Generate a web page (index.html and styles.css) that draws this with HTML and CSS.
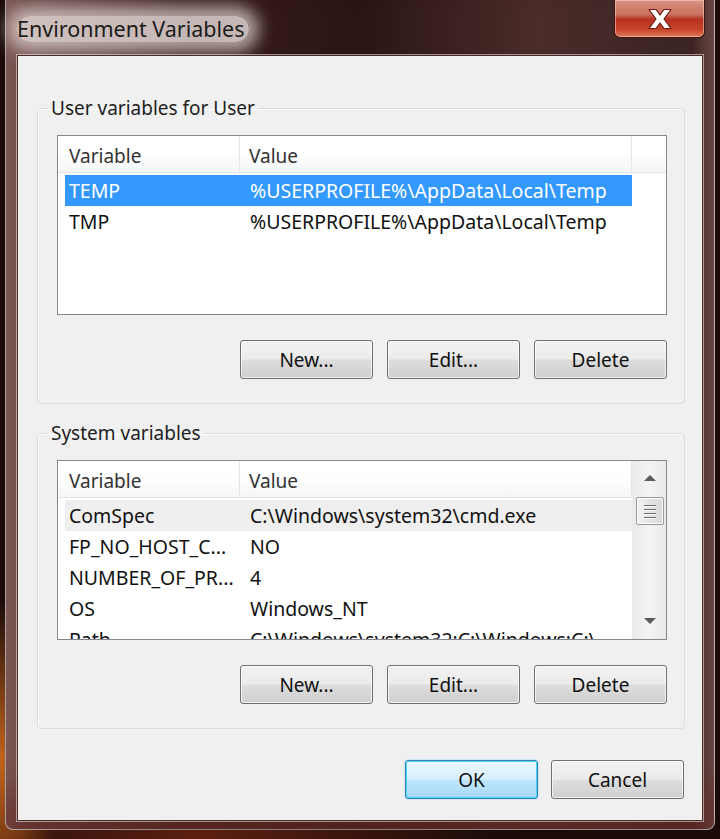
FILE: index.html
```html
<!DOCTYPE html>
<html lang="en">
<head>
    <meta charset="UTF-8">
    <meta name="viewport" content="width=device-width, initial-scale=1.0">
    <title>Environment Variables</title>
    <link rel="stylesheet" href="styles.css">
</head>
<body>
    <div class="window">
        <div class="titlebar">
            <span class="title">Environment Variables</span>
            <button class="close" aria-label="Close">
                <svg width="28" height="22" viewBox="0 0 28 22">
                    <path d="M3 1.5h7l4 5.5 4-5.5h7l-7 9.5 7 9.5h-7l-4-5.5-4 5.5H3l7-9.5z" fill="#fff" stroke="#6b1b10" stroke-width="1.2" stroke-linejoin="round"/>
                </svg>
            </button>
        </div>
        <div class="client">
            <fieldset class="group">
                <legend>User variables for User</legend>
                <div class="list">
                    <div class="list-body">
                        <div class="list-head">
                            <span class="col-var">Variable</span>
                            <span class="col-val">Value</span>
                            <span class="col-fill"></span>
                        </div>
                        <div class="row selected"><span>TEMP</span><span>%USERPROFILE%\AppData\Local\Temp</span></div>
                        <div class="row"><span>TMP</span><span>%USERPROFILE%\AppData\Local\Temp</span></div>
                    </div>
                </div>
                <div class="buttons">
                    <button class="btn">New...</button>
                    <button class="btn">Edit...</button>
                    <button class="btn">Delete</button>
                </div>
            </fieldset>

            <fieldset class="group">
                <legend>System variables</legend>
                <div class="list">
                    <div class="list-body">
                        <div class="list-head">
                            <span class="col-var">Variable</span>
                            <span class="col-val">Value</span>
                        </div>
                        <div class="row focused"><span>ComSpec</span><span>C:\Windows\system32\cmd.exe</span></div>
                        <div class="row"><span>FP_NO_HOST_C...</span><span>NO</span></div>
                        <div class="row"><span>NUMBER_OF_PR...</span><span>4</span></div>
                        <div class="row"><span>OS</span><span>Windows_NT</span></div>
                        <div class="row"><span>Path</span><span>C:\Windows\system32;C:\Windows;C:\</span></div>
                    </div>
                    <div class="scrollbar">
                        <span class="arrow up"></span>
                        <span class="thumb"><i></i><i></i><i></i><i></i></span>
                        <span class="arrow down"></span>
                    </div>
                </div>
                <div class="buttons">
                    <button class="btn">New...</button>
                    <button class="btn">Edit...</button>
                    <button class="btn">Delete</button>
                </div>
            </fieldset>

            <div class="dialog-buttons">
                <button class="btn default">OK</button>
                <button class="btn">Cancel</button>
            </div>
        </div>
    </div>
</body>
</html>
```

FILE: styles.css
```css
* {
    box-sizing: border-box;
}
body {
    margin: 0;
    width: 720px;
    height: 839px;
    overflow: hidden;
    font-family: "Noto Sans", "Open Sans", sans-serif;
    background-color: #1a0b09;
    background-image:
        radial-gradient(ellipse 60px 160px at 0 760px, rgba(214, 110, 30, 0.9), rgba(214, 110, 30, 0) 100%),
        radial-gradient(ellipse 300px 120px at 200px 839px, rgba(120, 40, 20, 0.7), rgba(120, 40, 20, 0) 100%);
}
.window {
    margin: 0 5px;
    height: 830px;
    padding: 0 11px 8px;
    border: 1px solid rgba(255, 255, 255, 0.45);
    border-top: none;
    border-radius: 0 0 8px 8px;
    background: linear-gradient(90deg, #8a6f6c 0, #6a4a48 3%, #3a1d1c 25%, #2a1514 50%, #4a2c2a 75%, #3a2423 97%, #6a5452 100%);
    display: flex;
    flex-direction: column;
    box-shadow: inset 0 -40px 40px rgba(100, 42, 36, 0.7);
}
.titlebar {
    height: 55px;
    display: flex;
    align-items: flex-start;
    justify-content: space-between;
}
.title {
    margin-top: 16px;
    margin-right: auto;
    padding: 0 4px 0 0;
    font-size: 21.5px;
    color: #1c1c1c;
    line-height: 26px;
    background: rgba(232, 222, 220, 0.8);
    border-radius: 14px;
    box-shadow: 0 0 16px 10px rgba(232, 222, 220, 0.7);
}
.close {
    width: 91px;
    height: 38px;
    margin-right: -2px;
    padding: 0;
    border: 1px solid #3f1510;
    border-top: none;
    border-radius: 0 0 6px 6px;
    background: linear-gradient(180deg, #d99383 0, #c9705d 40%, #b6321e 52%, #c8452c 80%, #e07a5c 100%);
    box-shadow: inset 0 0 0 1px rgba(255, 210, 200, 0.55);
    display: flex;
    align-items: center;
    justify-content: center;
}
.client {
    flex: 1;
    background: #f0f0f0;
    border: 1px solid #4a2a28;
    box-shadow: 0 0 0 1px rgba(255, 255, 255, 0.5);
    padding: 40px 17px 0 19px;
    display: flex;
    flex-direction: column;
}
.group {
    min-width: 0;
    margin: 0 0 17px;
    padding: 15px 17px 24px 19px;
    border: 1px solid #dcdcdc;
    border-radius: 4px;
    box-shadow: inset 1px 1px 0 #fff;
}
.group legend {
    padding: 0 3px;
    margin-left: -9px;
    font-size: 19px;
    color: #1e1e1e;
    line-height: 24px;
}
.list {
    height: 180px;
    border: 1px solid #828790;
    background: #fff;
    display: flex;
    overflow: hidden;
}
.list-body {
    flex: 1;
    min-width: 0;
    overflow: hidden;
}
.list-head {
    display: flex;
    height: 37px;
    border-bottom: 1px solid #e5e5e5;
    background: linear-gradient(180deg, #fff 0, #fff 40%, #f5f6f7 100%);
    font-size: 19px;
    color: #333;
    margin-bottom: 2px;
}
.list-head span {
    display: flex;
    align-items: center;
    padding-top: 4px;
    border-right: 1px solid #e5e5e5;
}
.col-var {
    width: 182px;
    padding-left: 11px;
}
.col-val {
    width: 392px;
    padding-left: 9px;
}
.col-fill {
    flex: 1;
    border-right: none !important;
}
.row {
    display: flex;
    height: 31px;
    margin-left: 7px;
    width: 567px;
    align-items: center;
    font-size: 19.5px;
    color: #111;
    white-space: nowrap;
}
.row span:first-child {
    width: 175px;
    padding-left: 4px;
}
.row span:last-child {
    padding-left: 10px;
}
.row.selected {
    background: #3399ff;
    color: #fff;
}
.row.focused {
    background: #efefef;
}
.scrollbar {
    width: 34px;
    background: linear-gradient(90deg, #e9e9e9, #f4f4f4 50%, #e9e9e9);
    border-left: 1px solid #ececec;
    display: flex;
    flex-direction: column;
    align-items: center;
}
.arrow {
    width: 0;
    height: 0;
    border-left: 6px solid transparent;
    border-right: 6px solid transparent;
}
.arrow.up {
    margin-top: 14px;
    border-bottom: 6px solid #5b5b5b;
}
.arrow.down {
    margin-top: auto;
    margin-bottom: 15px;
    border-top: 6px solid #5b5b5b;
}
.thumb {
    margin-top: 16px;
    width: 28px;
    height: 28px;
    border: 1px solid #9a9a9a;
    border-radius: 2px;
    background: linear-gradient(90deg, #f3f3f3, #e4e4e4 50%, #d8d8d8);
    box-shadow: inset 0 0 0 1px #fbfbfb;
    display: flex;
    flex-direction: column;
    align-items: center;
    justify-content: center;
    gap: 3px;
}
.thumb i {
    display: block;
    width: 12px;
    height: 1px;
    background: #6e6e6e;
    box-shadow: 0 1px 0 #fafafa;
}
.buttons {
    display: flex;
    justify-content: flex-end;
    gap: 14px;
    margin-top: 25px;
}
.btn {
    width: 133px;
    height: 39px;
    padding: 0;
    font-family: inherit;
    font-size: 19px;
    color: #111;
    border: 1px solid #707070;
    border-radius: 3px;
    background: linear-gradient(180deg, #f2f2f2 0, #ebebeb 48%, #dddddd 52%, #cfcfcf 100%);
    box-shadow: inset 0 0 0 1px rgba(255, 255, 255, 0.7);
}
.dialog-buttons {
    display: flex;
    justify-content: flex-end;
    gap: 13px;
    margin-top: 14px;
    margin-right: 1px;
}
.btn.default {
    border-color: #3c7fb1;
    background: linear-gradient(180deg, #eaf6fd 0, #d9f0fc 48%, #bee6fd 52%, #a7d9f5 100%);
    box-shadow: inset 0 0 0 1px #48d6f8, 0 0 2px #7fd3f5;
}
```
